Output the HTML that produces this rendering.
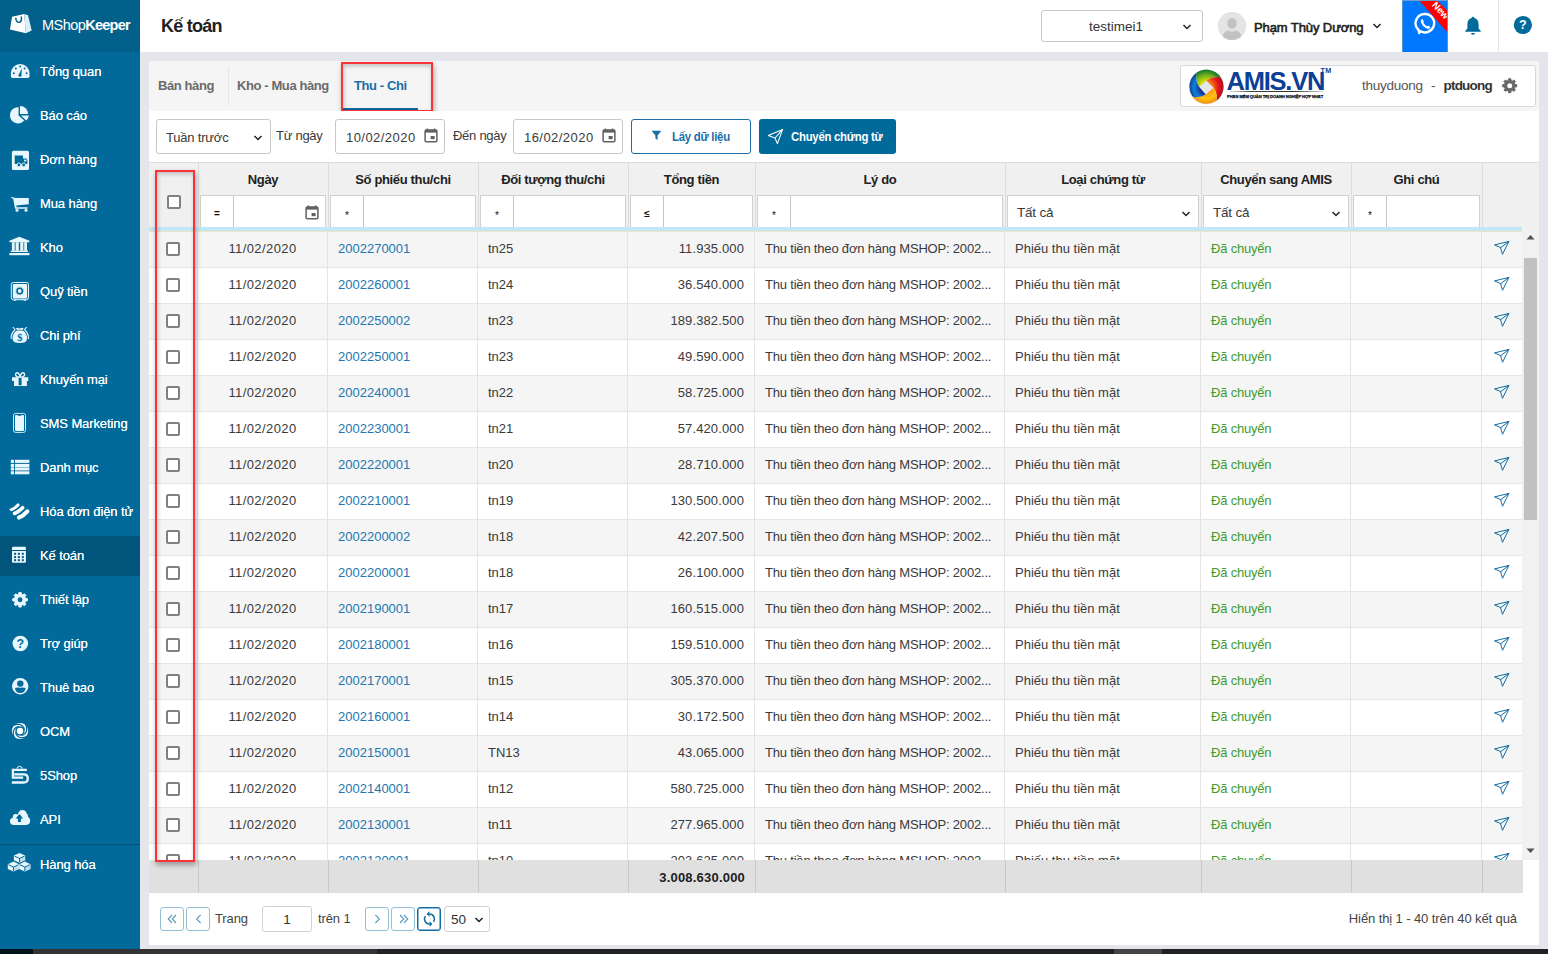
<!DOCTYPE html>
<html lang="vi">
<head>
<meta charset="utf-8">
<title>Kế toán - MShopKeeper</title>
<style>
*{box-sizing:border-box;margin:0;padding:0}
html,body{width:1548px;height:954px;overflow:hidden;background:#e4e6ec;font-family:"Liberation Sans",sans-serif;font-size:13px;color:#333}
#side{position:absolute;left:0;top:0;width:140px;height:949px;background:#026a9b}
#logo{position:absolute;left:0;top:0;width:140px;height:52px;background:#02608a}
#logo svg{position:absolute;left:9px;top:13px}
#logo .t{position:absolute;left:42px;top:15px;font-size:14.5px;color:#fff;letter-spacing:-0.55px;white-space:nowrap;line-height:20px}
#logo .t b{font-weight:700;letter-spacing:-0.75px}
.mi{position:absolute;left:0;width:140px;height:40px;color:#fff;font-size:13px;line-height:40px;white-space:nowrap}
.mi.act{background:#01557d}
.mi svg{position:absolute;left:7px;top:6px;overflow:visible}
.mi span{position:absolute;left:40px;top:0;letter-spacing:-0.1px;text-shadow:0 0 0.6px rgba(255,255,255,.9)}
#sdiv{position:absolute;left:0;top:844px;width:140px;height:1px;background:#014d73}
#top{position:absolute;left:140px;top:0;width:1408px;height:52px;background:#fff}
#top h1{position:absolute;left:21px;top:14px;font-size:18px;line-height:24px;font-weight:700;color:#212121;letter-spacing:-0.75px}
#shop{position:absolute;left:901px;top:10px;width:162px;height:32px;border:1px solid #c8c8c8;border-radius:3px;background:#fff;font-size:13.5px;line-height:32px;color:#333}
#shop span{position:absolute;left:47px;top:0}
.chev{position:absolute}
#ava{position:absolute;left:1078px;top:12px;width:28px;height:28px;border-radius:50%;background:#e2e2e2;overflow:hidden}
#uname{position:absolute;left:1114px;top:19px;font-size:13px;line-height:18px;color:#212121;font-weight:400;-webkit-text-stroke:0.6px #212121;letter-spacing:-0.1px;white-space:nowrap}
#call{position:absolute;left:1262px;top:0;width:46px;height:52px;background:#0077ff;overflow:hidden;border:1px solid #5b93cf;border-top:1px solid #6f9fc8;border-bottom:none}
#call svg{margin:-1px 0 0 -1px}
#newr{position:absolute;left:18px;top:-2px;width:50px;height:16px;background:#e8252d;transform:rotate(45deg);transform-origin:center;color:#fff;font-size:10px;font-weight:700;line-height:16px;text-align:center}
#tsep{position:absolute;left:1358px;top:0;width:1px;height:52px;background:#e6e6e6}
#panel{position:absolute;left:149px;top:61px;width:1390px;overflow:hidden;height:884px;background:#fff}
#tabs{position:absolute;left:0;top:0;width:1391px;height:50px;background:#f5f5f5}
.tab{position:absolute;top:16px;font-size:13px;line-height:18px;font-weight:700;color:#6a6a6a;white-space:nowrap;letter-spacing:-0.4px}
.tab.on{color:#1a6fa8}
#tsp{position:absolute;left:79px;top:6px;width:1px;height:38px;background:#e6e6e6}
#tul{position:absolute;left:194px;top:47px;width:75px;height:2px;background:#0f689f}
.redbox{position:absolute;border:2px solid #f93438;box-shadow:1px 3px 5px rgba(0,0,0,.32),inset 1px 2px 4px rgba(0,0,0,.22)}
#amis{position:absolute;left:1031px;top:4px;width:356px;height:42px;border:1px solid #d8d8d8;border-radius:3px;background:#fff}
#filt{position:absolute;left:0;top:50px;width:1391px;height:51px;background:#fff}
.inp{position:absolute;top:8px;height:35px;border:1px solid #c8c8c8;border-radius:3px;background:#fff;font-size:13px;line-height:35px;color:#3a3a3a;white-space:nowrap;letter-spacing:-0.2px}
.inp .d{letter-spacing:.45px}
.lbl{position:absolute;top:8px;font-size:13px;line-height:34px;color:#3a3a3a;white-space:nowrap;letter-spacing:-0.27px}
.btn{position:absolute;top:8px;height:35px;border-radius:3px;font-size:13px;font-weight:700;line-height:34px;white-space:nowrap;letter-spacing:-0.3px}
.btn span{transform-origin:0 50%;transform:scaleX(.875)}
#ghead{position:absolute;left:0;top:101px;width:1391px;height:65px;background:#f0f0f0;border-top:1px solid #dcdcdc}
.hc{position:absolute;top:0;height:64px;border-right:1px solid #dcdcdc}
.hc .t{position:absolute;left:0;right:0;top:8px;text-align:center;font-size:13px;line-height:18px;font-weight:700;color:#212121;white-space:nowrap;letter-spacing:-0.35px}
.fi{position:absolute;top:32px;height:33px;background:#fff;border:1px solid #d0d0d0;border-bottom-color:#c8c8c8}
.fi i{position:absolute;left:0;top:0;width:33px;height:32px;border-right:1px solid #c4c4c4;font-style:normal;font-size:10px;line-height:39px;text-align:center;color:#111}
.fi .s{position:absolute;left:9px;top:0;font-size:13.5px;line-height:34px;color:#3a3a3a;letter-spacing:-0.2px}
#hline{position:absolute;left:0;top:166px;width:1374px;height:5px;background:#c0e8f8;border-bottom:1px solid #efe3c2}
#gbody{position:absolute;left:0;top:171px;width:1374px;height:628px;overflow:hidden;background:#fff}
.row{position:relative;height:36px;width:1374px;background:#fff;border-bottom:1px solid #e6e6e6}
.row.odd{background:#f5f5f5}
.c{position:absolute;top:0;height:35px;line-height:34px;font-size:13px;color:#3a3a3a;white-space:nowrap;overflow:hidden;border-right:1px solid #e4e4e4}
.c0{left:0;width:49px}
.c1{left:49px;width:130px;text-align:center;letter-spacing:.4px}
.c2{left:179px;width:150px;padding-left:10px}
.c3{left:329px;width:150px;padding-left:10px}
.c4{left:479px;width:127px;text-align:right;padding-right:10px;letter-spacing:.12px}
.c5{left:606px;width:250px;padding-left:10px;letter-spacing:-.19px}
.c6{left:856px;width:196px;padding-left:10px}
.c7{left:1052px;width:150px;padding-left:10px}
.c8{left:1202px;width:131px}
.c9{left:1333px;width:41px;border-right:none}
.lnk{color:#2377b1}
.ok{color:#3f9b2c;letter-spacing:-.2px}
.cb{position:absolute;left:17px;top:10px;width:14px;height:14px;border:2px solid #808080;border-radius:2px;background:#fff}
.send{position:absolute;left:11px;top:8px}
#gfoot{position:absolute;left:0;top:799px;width:1374px;height:33px;background:#e0e0e0}
.fc{position:absolute;top:0;height:33px;border-right:1px solid #c8c8c8}
#total{position:absolute;left:479px;top:0;width:127px;height:32px;text-align:right;padding-right:10px;font-size:13px;font-weight:700;line-height:36px;color:#212121;letter-spacing:.2px}
#vsb{position:absolute;left:1373px;top:166px;width:18px;height:633px;background:#f1f1f1}
#vsb .th{position:absolute;left:2px;top:31px;width:13px;height:262px;background:#c1c1c1}
#pager{position:absolute;left:0;top:832px;width:1391px;height:52px;background:#fff}
.pb{position:absolute;top:14px;width:24px;height:24px;border:1px solid #93c0d6;border-radius:3px;background:#fff}
.pt{position:absolute;top:13px;font-size:13px;line-height:25px;letter-spacing:-.1px;color:#444;white-space:nowrap}
#bbar{position:absolute;left:0;top:949px;width:1548px;height:5px;background:#222}
#bbar1{position:absolute;left:0;top:0;width:33px;height:5px;background:#02121a}
#bbar2{position:absolute;left:1114px;top:0;width:48px;height:5px;background:#444}
#bbar3{position:absolute;left:33px;top:0;width:344px;height:5px;background:#333}

</style>
</head>
<body>
<div id="side">
<div id="logo"><svg width="25" height="22" viewBox="0 0 26 24" preserveAspectRatio="none"><path d="M3.2 4.2 L15.8 1.2 L17.6 22 L1 18 Z" fill="#fff"/><path d="M15.8 1.2 L19.8 2.4 L23.6 19 L17.6 22 Z" fill="#dcf0fa"/><path d="M7 5.2 Q7.4 10.6 10.6 10.2 Q13.6 9.6 12.8 3.8" fill="none" stroke="#02608a" stroke-width="1.6"/></svg><div class="t">MShop<b>Keeper</b></div></div>
<div class="mi" style="top:52px"><svg width="26" height="26" viewBox="0 0 26 26"><g transform="translate(0,4)"><path d="M5.4 16 Q3.9 16 3.9 14.6 V11.2 A9.3 9.3 0 0 1 22.5 11.2 V14.6 Q22.5 16 21 16 Z" fill="#e8f7fe"/><g fill="#026a9b"><circle cx="6.8" cy="11.2" r="1"/><circle cx="8.8" cy="6.6" r="1"/><circle cx="13.2" cy="4.6" r="1"/><circle cx="17.6" cy="6.6" r="1"/><circle cx="19.6" cy="11.2" r="1"/><path d="M15 6.2 L14.4 12.4 A1.6 1.6 0 1 1 12 12 Z"/></g></g></svg><span>Tổng quan</span></div>
<div class="mi" style="top:96px"><svg width="26" height="26" viewBox="0 0 26 26"><g transform="translate(0,4)"><path d="M11.6 1.2 A8.1 8.1 0 1 0 17.2 14.6 L11.6 9.4 Z" fill="#e8f7fe"/><path d="M13 0 A8 8 0 0 1 21 8 L13 8 Z" fill="#e8f7fe"/><path d="M14 9.4 L21.9 9.4 A8.6 8.6 0 0 1 19.3 14.6 Z" fill="#e8f7fe"/></g></svg><span>Báo cáo</span></div>
<div class="mi" style="top:140px"><svg width="26" height="26" viewBox="0 0 26 26"><rect x="4.9" y="4.8" width="17.1" height="19.2" rx="1.6" fill="#e8f7fe"/><path d="M7.7 9.6 H16 V12.6 H19.4 L20.4 14 V18 H7.7 Z" fill="#026a9b"/><rect x="17" y="13.6" width="2.4" height="1.8" fill="#e8f7fe"/><circle cx="11.9" cy="18.9" r="1.9" fill="#026a9b" stroke="#e8f7fe" stroke-width="0.9"/><circle cx="16.7" cy="18.9" r="1.9" fill="#026a9b" stroke="#e8f7fe" stroke-width="0.9"/></svg><span>Đơn hàng</span></div>
<div class="mi" style="top:184px"><svg width="26" height="26" viewBox="0 0 26 26"><path d="M4.3 7 L7.4 7.4 L7.7 8.1 H21.8 V14.2 L9.3 15.6 L9.6 17.2 H20.6 V18.8 H8 L6.2 8.6 L4.3 8.2 Z" fill="#e8f7fe"/><circle cx="10" cy="20.3" r="1.5" fill="#e8f7fe"/><circle cx="19" cy="20.3" r="1.5" fill="#e8f7fe"/></svg><span>Mua hàng</span></div>
<div class="mi" style="top:228px"><svg width="26" height="26" viewBox="0 0 26 26"><g fill="#e8f7fe"><path d="M12.4 2.8 L22.4 6.8 V8.2 H2.4 V6.8 Z"/><rect x="4.9" y="8.2" width="2.8" height="8.6"/><rect x="8.6" y="8.2" width="3.2" height="8.6"/><rect x="13.2" y="8.2" width="3.2" height="8.6"/><rect x="17.2" y="8.2" width="2.8" height="8.6"/><rect x="3.8" y="16.6" width="17.2" height="1.4"/><rect x="2.4" y="19" width="20" height="2.2"/></g></svg><span>Kho</span></div>
<div class="mi" style="top:272px"><svg width="26" height="26" viewBox="0 0 26 26"><rect x="4.3" y="4.5" width="17.2" height="17.2" rx="2" fill="none" stroke="#e8f7fe" stroke-width="1"/><rect x="5.9" y="6" width="14.2" height="14.4" rx="1" fill="#e8f7fe"/><circle cx="12.7" cy="13" r="3.5" fill="#026a9b"/><circle cx="12.7" cy="13" r="1.9" fill="#e8f7fe"/><circle cx="12.7" cy="13" r="4" fill="none" stroke="#026a9b" stroke-width="0.9" stroke-dasharray="1 1.5" opacity=".55"/><rect x="6.6" y="21.8" width="2.6" height="0.9" fill="#e8f7fe"/><rect x="16.4" y="21.8" width="2.6" height="0.9" fill="#e8f7fe"/></svg><span>Quỹ tiền</span></div>
<div class="mi" style="top:316px"><svg width="26" height="26" viewBox="0 0 26 26"><path d="M9 6.2 L10.6 5.8 L12.8 6.4 L15 5.8 L16.6 6.2 L15.6 8.2 Q20.6 11.4 19.9 17.4 Q19.4 20.9 12.8 20.9 Q6.2 20.9 5.7 17.4 Q5 11.4 10 8.2 Z" fill="#e8f7fe"/><path d="M7.8 8 Q3.8 11.4 4.2 17" fill="none" stroke="#e8f7fe" stroke-width="1.1"/><path d="M17.8 8 Q21.8 11.4 21.4 17" fill="none" stroke="#e8f7fe" stroke-width="1.1"/><path d="M5.8 5 L8.4 7.8 M19.8 5 L17.2 7.8" stroke="#e8f7fe" stroke-width="1.1"/><path d="M9.4 8.2 H16.2" stroke="#026a9b" stroke-width="0.7"/><text x="12.8" y="19" font-family="Liberation Serif, serif" font-size="10.5" font-weight="700" fill="#026a9b" text-anchor="middle">$</text></svg><span>Chi phí</span></div>
<div class="mi" style="top:360px"><svg width="26" height="26" viewBox="0 0 26 26"><path d="M5 11.3 H21.3 V15 H5 Z M7 15 H19.9 V20 H7 Z" fill="#e8f7fe"/><rect x="11.6" y="11.3" width="3" height="8" fill="#026a9b"/><path d="M13.1 11 Q9 11.4 8.6 8.8 Q8.6 6.6 10.4 6.6 Q12.4 7 13.1 11 Q13.8 7 15.8 6.6 Q17.6 6.6 17.6 8.8 Q17.2 11.4 13.1 11 Z" fill="none" stroke="#e8f7fe" stroke-width="1.3"/></svg><span>Khuyến mại</span></div>
<div class="mi" style="top:404px"><svg width="26" height="26" viewBox="0 0 26 26"><rect x="6.5" y="3.4" width="12" height="19" rx="2" fill="none" stroke="#e8f7fe" stroke-width="0.9"/><rect x="8" y="4.9" width="9" height="16" rx="1" fill="#e8f7fe"/><rect x="10.6" y="4.6" width="3.8" height="1.1" rx="0.5" fill="#026a9b"/></svg><span>SMS Marketing</span></div>
<div class="mi" style="top:448px"><svg width="26" height="26" viewBox="0 0 26 26"><g fill="#e8f7fe"><rect x="3.8" y="5.8" width="3.2" height="3.1"/><rect x="7.9" y="5.8" width="14.5" height="3.1"/><rect x="3.8" y="9.9" width="3.2" height="3.1"/><rect x="7.9" y="9.9" width="14.5" height="3.1"/><rect x="3.8" y="13.4" width="3.2" height="3.1"/><rect x="7.9" y="13.4" width="14.5" height="3.1"/><rect x="3.8" y="17.3" width="3.2" height="3"/><rect x="7.9" y="17.3" width="14.5" height="3"/></g></svg><span>Danh mục</span></div>
<div class="mi" style="top:492px"><svg width="26" height="26" viewBox="0 0 26 26"><g fill="none" stroke="#fff" stroke-linecap="round"><path d="M11 6.9 Q7.6 10.6 4.6 11.6" stroke-width="3"/><path d="M15.6 9.8 Q11.6 14 7.6 15.4" stroke-width="3.7"/><path d="M20.3 13.4 Q16 18.2 12 19.6" stroke-width="4.2"/></g><path d="M2 10.4 Q4 12 6 11.4 L4.6 13 Q3 12.6 2 10.4 Z" fill="#fff"/></svg><span>Hóa đơn điện tử</span></div>
<div class="mi act" style="top:536px"><svg width="26" height="26" viewBox="0 0 26 26"><path d="M6.2 4.7 H17.7 Q18.9 4.7 18.9 5.9 V8 H5 V5.9 Q5 4.7 6.2 4.7 Z" fill="#e8f7fe"/><path d="M5 9 H18.9 V19.6 Q18.9 20.8 17.7 20.8 H6.2 Q5 20.8 5 19.6 Z" fill="#e8f7fe"/><g fill="#01557d"><rect x="7.1" y="10.8" width="2" height="2"/><rect x="10.9" y="10.8" width="2" height="2"/><rect x="14.8" y="10.8" width="2" height="2"/><rect x="7.1" y="14.1" width="2" height="2"/><rect x="10.9" y="14.1" width="2" height="2"/><rect x="14.8" y="14.1" width="2" height="2"/><rect x="7.1" y="17.2" width="2" height="2"/><rect x="10.9" y="17.2" width="2" height="2"/><rect x="14.8" y="17.2" width="2" height="2"/></g></svg><span>Kế toán</span></div>
<div class="mi" style="top:580px"><svg width="26" height="26" viewBox="0 0 26 26"><path d="M11.89 6.44 L14.21 6.44 L14.38 8.21 L16.03 8.89 L17.40 7.76 L19.04 9.40 L17.91 10.77 L18.59 12.42 L20.36 12.59 L20.36 14.91 L18.59 15.08 L17.91 16.73 L19.04 18.10 L17.40 19.74 L16.03 18.61 L14.38 19.29 L14.21 21.06 L11.89 21.06 L11.72 19.29 L10.07 18.61 L8.70 19.74 L7.06 18.10 L8.19 16.73 L7.51 15.08 L5.74 14.91 L5.74 12.59 L7.51 12.42 L8.19 10.77 L7.06 9.40 L8.70 7.76 L10.07 8.89 L11.72 8.21 Z" fill="#e8f7fe" stroke="#e8f7fe" stroke-width="1" stroke-linejoin="round"/><circle cx="13.05" cy="13.75" r="2.4" fill="#026a9b"/></svg><span>Thiết lập</span></div>
<div class="mi" style="top:624px"><svg width="26" height="26" viewBox="0 0 26 26"><circle cx="13.3" cy="13.5" r="7.8" fill="#e8f7fe"/><text x="13.3" y="18" font-family="Liberation Sans, sans-serif" font-size="12.5" font-weight="700" fill="#026a9b" text-anchor="middle">?</text></svg><span>Trợ giúp</span></div>
<div class="mi" style="top:668px"><svg width="26" height="26" viewBox="0 0 26 26"><circle cx="13.2" cy="12.2" r="8.2" fill="#e8f7fe"/><circle cx="13.3" cy="9.6" r="3.2" fill="#026a9b"/><path d="M8 14 Q10.4 13 13.3 13.8 Q16.2 13 18.6 14 Q18.2 19 13.3 19 Q8.4 19 8 14 Z" fill="#026a9b"/></svg><span>Thuê bao</span></div>
<div class="mi" style="top:712px"><svg width="26" height="26" viewBox="0 0 26 26"><circle cx="13" cy="13" r="8.1" fill="#fff"/><circle cx="13" cy="13" r="4.7" fill="#026a9b"/><circle cx="13" cy="13" r="3.2" fill="#fff"/><path d="M6.68 7.31 L8.01 6.85 L9.22 6.49 L10.40 6.31 L11.54 6.30 L12.62 6.45 L13.61 6.75 L14.50 7.19 L15.28 7.73 L15.94 8.37 L16.46 9.06 L16.84 9.80 L17.08 10.56 L17.20 11.31 L17.19 12.03" fill="none" stroke="#026a9b" stroke-width="1.25" stroke-linejoin="round"/><path d="M18.69 6.68 L19.15 8.01 L19.51 9.22 L19.69 10.40 L19.70 11.54 L19.55 12.62 L19.25 13.61 L18.81 14.50 L18.27 15.28 L17.63 15.94 L16.94 16.46 L16.20 16.84 L15.44 17.08 L14.69 17.20 L13.97 17.19" fill="none" stroke="#026a9b" stroke-width="1.25" stroke-linejoin="round"/><path d="M19.32 18.69 L17.99 19.15 L16.78 19.51 L15.60 19.69 L14.46 19.70 L13.38 19.55 L12.39 19.25 L11.50 18.81 L10.72 18.27 L10.06 17.63 L9.54 16.94 L9.16 16.20 L8.92 15.44 L8.80 14.69 L8.81 13.97" fill="none" stroke="#026a9b" stroke-width="1.25" stroke-linejoin="round"/><path d="M7.31 19.32 L6.85 17.99 L6.49 16.78 L6.31 15.60 L6.30 14.46 L6.45 13.38 L6.75 12.39 L7.19 11.50 L7.73 10.72 L8.37 10.06 L9.06 9.54 L9.80 9.16 L10.56 8.92 L11.31 8.80 L12.03 8.81" fill="none" stroke="#026a9b" stroke-width="1.25" stroke-linejoin="round"/></svg><span>OCM</span></div>
<div class="mi" style="top:756px"><svg width="26" height="26" viewBox="0 0 26 26"><g fill="none" stroke="#e8f7fe"><path d="M10 6.7 Q10 4.4 12.6 4.4 Q15.2 4.4 15.2 6.7" stroke-width="1"/><path d="M19.9 7.9 H5.9 V15.7 H16.1" stroke-width="2.3"/><path d="M7.2 12.4 H16.6 Q20.8 12.4 20.8 16.5 Q20.8 20.5 16.6 20.5 H4.8" stroke-width="2.3"/></g></svg><span>5Shop</span></div>
<div class="mi" style="top:800px"><svg width="26" height="26" viewBox="0 0 26 26"><path d="M7 18.9 Q2.9 18.9 2.9 15.2 Q2.9 12.4 5.8 11.8 Q5.4 8.8 8 8 Q9.6 7.6 10.8 8.6 Q11.8 4 15.4 4 Q19 4 19.6 7.6 Q21 7.8 21.2 11 Q23.2 12 23.2 14.8 Q23.2 18.9 19.2 18.9 Z" fill="#e8f7fe"/><path d="M12.4 8 L16.2 12.4 H13.9 V16 H10.9 V12.4 H8.6 Z" fill="#026a9b"/></svg><span>API</span></div>
<div id="sdiv"></div>
<div class="mi" style="top:845px"><svg width="26" height="26" viewBox="0 0 26 26"><path d="M12.55 2.10 L18.20 4.60 V9.20 L12.55 11.70 L6.90 9.20 V4.60 Z" fill="#e8f7fe"/><path d="M7.50 5.10 L12.55 7.39 L17.60 5.10 M12.55 7.39 V11.10" fill="none" stroke="#026a9b" stroke-width="1"/><path d="M12.55 7.89 L17.70 5.60 V9.00 L12.55 11.20 Z" fill="#026a9b" opacity=".18"/><path d="M6.45 10.60 L12.10 13.20 V18.00 L6.45 20.60 L0.80 18.00 V13.20 Z" fill="#e8f7fe"/><path d="M1.40 13.70 L6.45 16.10 L11.50 13.70 M6.45 16.10 V20.00" fill="none" stroke="#026a9b" stroke-width="1"/><path d="M6.45 16.60 L11.60 14.20 V17.80 L6.45 20.10 Z" fill="#026a9b" opacity=".18"/><path d="M17.85 10.60 L23.50 13.20 V18.00 L17.85 20.60 L12.20 18.00 V13.20 Z" fill="#e8f7fe"/><path d="M12.80 13.70 L17.85 16.10 L22.90 13.70 M17.85 16.10 V20.00" fill="none" stroke="#026a9b" stroke-width="1"/><path d="M17.85 16.60 L23.00 14.20 V17.80 L17.85 20.10 Z" fill="#026a9b" opacity=".18"/></svg><span>Hàng hóa</span></div>
</div>
<div id="top">
<h1>Kế toán</h1>
<div id="shop"><span>testimei1</span><svg class="chev" style="left:140px;top:12px" width="10" height="8" viewBox="0 0 10 8"><path d="M1.5 2 L5 5.5 L8.5 2" fill="none" stroke="#222" stroke-width="1.5"/></svg></div>
<div id="ava"><svg width="28" height="28" viewBox="0 0 28 28"><circle cx="14" cy="14" r="14" fill="#e4e4e4"/><ellipse cx="14" cy="11.4" rx="4.6" ry="5.4" fill="#c2c2c2"/><path d="M4 28 Q4 19 11 18.4 L14 20 L17 18.4 Q24 19 24 28 Z" fill="#c2c2c2"/></svg></div>
<div id="uname">Phạm Thùy Dương</div>
<svg class="chev" style="left:1232px;top:22px" width="10" height="8" viewBox="0 0 10 8"><path d="M1.5 2 L5 5.5 L8.5 2" fill="none" stroke="#222" stroke-width="1.5"/></svg>
<div id="call"><svg style="position:absolute;left:0;top:0" width="46" height="52" viewBox="0 0 46 52"><path d="M23 14 A9.2 9.2 0 1 1 18.6 31.3 L17.2 33 L16.6 30 A9.2 9.2 0 0 1 23 14 Z" fill="none" stroke="#fff" stroke-width="2.4" stroke-linejoin="round"/><path d="M19.4 19.6 Q20.2 18.6 20.8 19.4 L21.8 21.4 Q22 22 21.3 22.6 Q22.4 25 25 26.3 Q25.6 25.6 26.2 25.8 L28 26.8 Q28.6 27.4 27.8 28.2 Q26.6 29.4 24.2 28.2 Q20.4 26 19 22.4 Q18.6 20.6 19.4 19.6 Z" fill="#fff"/><path d="M17.6 0.8 L35.4 0.8 L45.2 10.4 L45.2 32.1 Z" fill="#ff0000"/><text x="0" y="0" transform="translate(36.2,12.6) rotate(47)" font-family="Liberation Sans, sans-serif" font-size="9.6" font-weight="700" fill="#fff" text-anchor="middle">New</text></svg></div>
<svg style="position:absolute;left:1324px;top:16px" width="18" height="20" viewBox="0 0 18 20"><path d="M9 0.8 Q10.2 0.8 10.3 2 Q14.4 3 14.6 8 V12.6 L16.8 15 V15.8 H1.2 V15 L3.4 12.6 V8 Q3.6 3 7.7 2 Q7.8 0.8 9 0.8 Z" fill="#026a9b"/><path d="M7 17 H11 Q10.8 18.8 9 18.8 Q7.2 18.8 7 17 Z" fill="#026a9b"/></svg>
<div id="tsep"></div>
<svg style="position:absolute;left:1373px;top:15px" width="20" height="20" viewBox="0 0 20 20"><circle cx="9.9" cy="10" r="9.1" fill="#026a9b"/><text x="9.9" y="14.4" font-family="Liberation Sans, sans-serif" font-size="12.5" font-weight="700" fill="#fff" text-anchor="middle">?</text></svg>
</div>

<div id="panel">
<div id="tabs"><div class="tab" style="left:9px">Bán hàng</div><div id="tsp"></div><div class="tab" style="left:88px">Kho - Mua hàng</div><div class="tab on" style="left:205px">Thu - Chi</div><div id="tul"></div>
<div class="redbox" style="left:192px;top:1px;width:92px;height:50px"></div>
<div id="amis"><svg style="position:absolute;left:7.3px;top:2.5px" width="36.4" height="36.4" viewBox="0 0 36 36"><defs><radialGradient id="gg" cx="18" cy="18" r="17.4" gradientUnits="userSpaceOnUse"><stop offset="0.35" stop-color="#d6dc00"/><stop offset="0.7" stop-color="#6fb01e"/><stop offset="1" stop-color="#0b7428"/></radialGradient><radialGradient id="gr" cx="18" cy="18" r="17.4" gradientUnits="userSpaceOnUse"><stop offset="0.35" stop-color="#f47a14"/><stop offset="0.7" stop-color="#e8141c"/><stop offset="1" stop-color="#a81018"/></radialGradient><radialGradient id="go" cx="18" cy="18" r="17.4" gradientUnits="userSpaceOnUse"><stop offset="0.3" stop-color="#f7931a"/><stop offset="0.65" stop-color="#ffc60a"/><stop offset="1" stop-color="#f08010"/></radialGradient><radialGradient id="gb" cx="18" cy="18" r="17.4" gradientUnits="userSpaceOnUse"><stop offset="0.35" stop-color="#1b2d96"/><stop offset="0.7" stop-color="#0b86d6"/><stop offset="1" stop-color="#14309c"/></radialGradient></defs><circle cx="18" cy="18" r="17.2" fill="#e4e6e8"/><path d="M10.9 17.6 L18.2 11.4 Q26 7 32.6 8.3 A17.4 17.4 0 0 0 8.3 3.6 Q7 11 10.9 17.6 Z" fill="url(#gg)"/><path d="M18.2 11.4 L25.4 18.6 Q30 25 28 31.5 A17.4 17.4 0 0 0 32.6 8.3 Q26 7 18.2 11.4 Z" fill="url(#gr)"/><path d="M25.4 18.6 L17.6 25.3 Q10 29.5 4.2 26.9 A17.4 17.4 0 0 0 28 31.5 Q30 25 25.4 18.6 Z" fill="url(#go)"/><path d="M17.6 25.3 L10.9 17.6 Q7 11 8.3 3.6 A17.4 17.4 0 0 0 4.2 26.9 Q10 29.5 17.6 25.3 Z" fill="url(#gb)"/></svg>
<div style="position:absolute;left:45.6px;top:2px;width:98px;height:26px;font-size:25.5px;line-height:27px;font-weight:700;color:#0c3f98;letter-spacing:-1.25px;white-space:nowrap">AMIS.VN</div>
<div style="position:absolute;left:139.5px;top:1px;font-size:7.2px;line-height:8px;font-weight:700;color:#0c3f98;white-space:nowrap;letter-spacing:.4px">TM</div>
<div style="position:absolute;left:46px;top:24.6px;width:96px;height:1px;background:linear-gradient(90deg,rgba(60,60,60,0),#444 25%,#333 70%,rgba(60,60,60,.2))"></div>
<div style="position:absolute;left:46px;top:28.3px;font-size:4.1px;line-height:6px;font-weight:700;color:#111;-webkit-text-stroke:.25px #111;white-space:nowrap;letter-spacing:-0.07px">PHẦN MỀM QUẢN TRỊ DOANH NGHIỆP HỢP NHẤT</div>
<div style="position:absolute;left:181px;top:11px;font-size:13.5px;line-height:18px;color:#555;white-space:nowrap;letter-spacing:-0.25px">thuyduong</div>
<div style="position:absolute;left:250px;top:11px;font-size:13.5px;line-height:18px;color:#555">-</div>
<div style="position:absolute;left:262.5px;top:11px;font-size:13.5px;line-height:18px;font-weight:700;color:#333;white-space:nowrap;letter-spacing:-0.8px">ptduong</div>
<svg style="position:absolute;left:320px;top:11px" width="18" height="18" viewBox="0 0 18 18"><path d="M7.59 1.69 L9.81 1.69 L9.96 3.45 L11.52 4.10 L12.87 2.96 L14.44 4.53 L13.30 5.88 L13.95 7.44 L15.71 7.59 L15.71 9.81 L13.95 9.96 L13.30 11.52 L14.44 12.87 L12.87 14.44 L11.52 13.30 L9.96 13.95 L9.81 15.71 L7.59 15.71 L7.44 13.95 L5.88 13.30 L4.53 14.44 L2.96 12.87 L4.10 11.52 L3.45 9.96 L1.69 9.81 L1.69 7.59 L3.45 7.44 L4.10 5.88 L2.96 4.53 L4.53 2.96 L5.88 4.10 L7.44 3.45 Z" fill="#686868" stroke="#686868" stroke-width="1" stroke-linejoin="round"/><circle cx="8.7" cy="8.7" r="2.5" fill="#fff"/></svg>
</div></div>
<div id="filt">
<div class="inp" style="left:7px;width:115px"><span style="position:absolute;left:9px">Tuần trước</span><svg class="chev" style="left:96px;top:14px" width="10" height="8" viewBox="0 0 10 8"><path d="M1.5 2 L5 5.5 L8.5 2" fill="none" stroke="#222" stroke-width="1.5"/></svg></div>
<div class="lbl" style="left:127px">Từ ngày</div>
<div class="inp" style="left:186px;width:110px"><span class="d" style="position:absolute;left:10px">10/02/2020</span><svg class="cal" style="position:absolute;left:88px;top:8px" width="14" height="15" viewBox="0 0 14 15"><path d="M3.4 0.4 V2 M10.6 0.4 V2" stroke="#616161" stroke-width="1.6"/><rect x="1.1" y="1.9" width="11.8" height="11.8" rx="1.2" fill="none" stroke="#616161" stroke-width="1.5"/><rect x="1" y="2" width="12" height="2.6" fill="#616161"/><rect x="6.6" y="8" width="4" height="3.2" fill="#616161"/></svg></div>
<div class="lbl" style="left:304px">Đến ngày</div>
<div class="inp" style="left:364px;width:110px"><span class="d" style="position:absolute;left:10px">16/02/2020</span><svg class="cal" style="position:absolute;left:88px;top:8px" width="14" height="15" viewBox="0 0 14 15"><path d="M3.4 0.4 V2 M10.6 0.4 V2" stroke="#616161" stroke-width="1.6"/><rect x="1.1" y="1.9" width="11.8" height="11.8" rx="1.2" fill="none" stroke="#616161" stroke-width="1.5"/><rect x="1" y="2" width="12" height="2.6" fill="#616161"/><rect x="6.6" y="8" width="4" height="3.2" fill="#616161"/></svg></div>
<div class="btn" style="left:482px;width:120px;border:1px solid #1a6fa8;color:#1a6fa8;background:#fff"><svg style="position:absolute;left:19px;top:10px" width="11" height="11" viewBox="0 0 11 11"><path d="M0.6 0.8 H10.4 L6.6 5.4 V10 L4.4 8.6 V5.4 Z" fill="#1a6fa8"/></svg><span style="position:absolute;left:40px">Lấy dữ liệu</span></div>
<div class="btn" style="left:610px;width:137px;background:#026a9b;color:#fff;line-height:36px"><svg style="position:absolute;left:8px;top:9px" width="17" height="17" viewBox="0 0 17 17"><path d="M1.2 7.6 L15.6 1.4 L10.4 15.6 L8 10 L15.6 1.4 M8 10 L1.2 7.6" fill="none" stroke="#fff" stroke-width="1.1" stroke-linejoin="round"/></svg><span style="position:absolute;left:32px">Chuyển chứng từ</span></div>
</div>
<div id="ghead">
<div class="hc" style="left:0px;width:50px"><span class="cb" style="left:18px;top:32px"></span></div>
<div class="hc" style="left:49px;width:131px"><div class="t">Ngày</div><div class="fi" style="left:2px;width:126px"><i style="font-size:10px;font-weight:700;line-height:36px">=</i><svg class="cal" style="position:absolute;left:104px;top:9px" width="14" height="15" viewBox="0 0 14 15"><path d="M3.4 0.4 V2 M10.6 0.4 V2" stroke="#616161" stroke-width="1.6"/><rect x="1.1" y="1.9" width="11.8" height="11.8" rx="1.2" fill="none" stroke="#616161" stroke-width="1.5"/><rect x="1" y="2" width="12" height="2.6" fill="#616161"/><rect x="6.6" y="8" width="4" height="3.2" fill="#616161"/></svg></div></div>
<div class="hc" style="left:179px;width:151px"><div class="t">Số phiếu thu/chi</div><div class="fi" style="left:2px;width:146px"><i>*</i></div></div>
<div class="hc" style="left:329px;width:151px"><div class="t">Đối tượng thu/chi</div><div class="fi" style="left:2px;width:146px"><i>*</i></div></div>
<div class="hc" style="left:479px;width:128px"><div class="t">Tổng tiền</div><div class="fi" style="left:2px;width:123px"><i style="font-size:10px;font-weight:700;line-height:36px">≤</i></div></div>
<div class="hc" style="left:606px;width:251px"><div class="t">Lý do</div><div class="fi" style="left:2px;width:246px"><i>*</i></div></div>
<div class="hc" style="left:856px;width:197px"><div class="t">Loại chứng từ</div><div class="fi" style="left:2px;width:192px"><span class="s">Tất cả</span><svg class="chev" style="left:173px;top:14px" width="10" height="8" viewBox="0 0 10 8"><path d="M1.5 2 L5 5.5 L8.5 2" fill="none" stroke="#222" stroke-width="1.5"/></svg></div></div>
<div class="hc" style="left:1052px;width:151px"><div class="t">Chuyển sang AMIS</div><div class="fi" style="left:2px;width:146px"><span class="s">Tất cả</span><svg class="chev" style="left:127px;top:14px" width="10" height="8" viewBox="0 0 10 8"><path d="M1.5 2 L5 5.5 L8.5 2" fill="none" stroke="#222" stroke-width="1.5"/></svg></div></div>
<div class="hc" style="left:1202px;width:132px"><div class="t">Ghi chú</div><div class="fi" style="left:2px;width:127px"><i>*</i></div></div>
<div class="hc" style="left:1333px;width:58px;border-right:none"></div>
</div>
<div id="hline"></div>
<div id="gbody">
<div class="row odd"><div class="c c0"><span class="cb"></span></div><div class="c c1">11/02/2020</div><div class="c c2"><span class="lnk">2002270001</span></div><div class="c c3">tn25</div><div class="c c4">11.935.000</div><div class="c c5">Thu tiền theo đơn hàng MSHOP: 2002...</div><div class="c c6">Phiếu thu tiền mặt</div><div class="c c7"><span class="ok">Đã chuyển</span></div><div class="c c8"></div><div class="c c9"><svg class="send" width="18" height="18" viewBox="0 0 18 18"><path d="M1.9 4.8 L15.9 1.4 L9.5 14.3 L7.6 7.8 Z M7.6 7.8 L15.9 1.4" fill="none" stroke="#0f6ea3" stroke-width="1" stroke-linejoin="round" stroke-linecap="round"/></svg></div></div>
<div class="row"><div class="c c0"><span class="cb"></span></div><div class="c c1">11/02/2020</div><div class="c c2"><span class="lnk">2002260001</span></div><div class="c c3">tn24</div><div class="c c4">36.540.000</div><div class="c c5">Thu tiền theo đơn hàng MSHOP: 2002...</div><div class="c c6">Phiếu thu tiền mặt</div><div class="c c7"><span class="ok">Đã chuyển</span></div><div class="c c8"></div><div class="c c9"><svg class="send" width="18" height="18" viewBox="0 0 18 18"><path d="M1.9 4.8 L15.9 1.4 L9.5 14.3 L7.6 7.8 Z M7.6 7.8 L15.9 1.4" fill="none" stroke="#0f6ea3" stroke-width="1" stroke-linejoin="round" stroke-linecap="round"/></svg></div></div>
<div class="row odd"><div class="c c0"><span class="cb"></span></div><div class="c c1">11/02/2020</div><div class="c c2"><span class="lnk">2002250002</span></div><div class="c c3">tn23</div><div class="c c4">189.382.500</div><div class="c c5">Thu tiền theo đơn hàng MSHOP: 2002...</div><div class="c c6">Phiếu thu tiền mặt</div><div class="c c7"><span class="ok">Đã chuyển</span></div><div class="c c8"></div><div class="c c9"><svg class="send" width="18" height="18" viewBox="0 0 18 18"><path d="M1.9 4.8 L15.9 1.4 L9.5 14.3 L7.6 7.8 Z M7.6 7.8 L15.9 1.4" fill="none" stroke="#0f6ea3" stroke-width="1" stroke-linejoin="round" stroke-linecap="round"/></svg></div></div>
<div class="row"><div class="c c0"><span class="cb"></span></div><div class="c c1">11/02/2020</div><div class="c c2"><span class="lnk">2002250001</span></div><div class="c c3">tn23</div><div class="c c4">49.590.000</div><div class="c c5">Thu tiền theo đơn hàng MSHOP: 2002...</div><div class="c c6">Phiếu thu tiền mặt</div><div class="c c7"><span class="ok">Đã chuyển</span></div><div class="c c8"></div><div class="c c9"><svg class="send" width="18" height="18" viewBox="0 0 18 18"><path d="M1.9 4.8 L15.9 1.4 L9.5 14.3 L7.6 7.8 Z M7.6 7.8 L15.9 1.4" fill="none" stroke="#0f6ea3" stroke-width="1" stroke-linejoin="round" stroke-linecap="round"/></svg></div></div>
<div class="row odd"><div class="c c0"><span class="cb"></span></div><div class="c c1">11/02/2020</div><div class="c c2"><span class="lnk">2002240001</span></div><div class="c c3">tn22</div><div class="c c4">58.725.000</div><div class="c c5">Thu tiền theo đơn hàng MSHOP: 2002...</div><div class="c c6">Phiếu thu tiền mặt</div><div class="c c7"><span class="ok">Đã chuyển</span></div><div class="c c8"></div><div class="c c9"><svg class="send" width="18" height="18" viewBox="0 0 18 18"><path d="M1.9 4.8 L15.9 1.4 L9.5 14.3 L7.6 7.8 Z M7.6 7.8 L15.9 1.4" fill="none" stroke="#0f6ea3" stroke-width="1" stroke-linejoin="round" stroke-linecap="round"/></svg></div></div>
<div class="row"><div class="c c0"><span class="cb"></span></div><div class="c c1">11/02/2020</div><div class="c c2"><span class="lnk">2002230001</span></div><div class="c c3">tn21</div><div class="c c4">57.420.000</div><div class="c c5">Thu tiền theo đơn hàng MSHOP: 2002...</div><div class="c c6">Phiếu thu tiền mặt</div><div class="c c7"><span class="ok">Đã chuyển</span></div><div class="c c8"></div><div class="c c9"><svg class="send" width="18" height="18" viewBox="0 0 18 18"><path d="M1.9 4.8 L15.9 1.4 L9.5 14.3 L7.6 7.8 Z M7.6 7.8 L15.9 1.4" fill="none" stroke="#0f6ea3" stroke-width="1" stroke-linejoin="round" stroke-linecap="round"/></svg></div></div>
<div class="row odd"><div class="c c0"><span class="cb"></span></div><div class="c c1">11/02/2020</div><div class="c c2"><span class="lnk">2002220001</span></div><div class="c c3">tn20</div><div class="c c4">28.710.000</div><div class="c c5">Thu tiền theo đơn hàng MSHOP: 2002...</div><div class="c c6">Phiếu thu tiền mặt</div><div class="c c7"><span class="ok">Đã chuyển</span></div><div class="c c8"></div><div class="c c9"><svg class="send" width="18" height="18" viewBox="0 0 18 18"><path d="M1.9 4.8 L15.9 1.4 L9.5 14.3 L7.6 7.8 Z M7.6 7.8 L15.9 1.4" fill="none" stroke="#0f6ea3" stroke-width="1" stroke-linejoin="round" stroke-linecap="round"/></svg></div></div>
<div class="row"><div class="c c0"><span class="cb"></span></div><div class="c c1">11/02/2020</div><div class="c c2"><span class="lnk">2002210001</span></div><div class="c c3">tn19</div><div class="c c4">130.500.000</div><div class="c c5">Thu tiền theo đơn hàng MSHOP: 2002...</div><div class="c c6">Phiếu thu tiền mặt</div><div class="c c7"><span class="ok">Đã chuyển</span></div><div class="c c8"></div><div class="c c9"><svg class="send" width="18" height="18" viewBox="0 0 18 18"><path d="M1.9 4.8 L15.9 1.4 L9.5 14.3 L7.6 7.8 Z M7.6 7.8 L15.9 1.4" fill="none" stroke="#0f6ea3" stroke-width="1" stroke-linejoin="round" stroke-linecap="round"/></svg></div></div>
<div class="row odd"><div class="c c0"><span class="cb"></span></div><div class="c c1">11/02/2020</div><div class="c c2"><span class="lnk">2002200002</span></div><div class="c c3">tn18</div><div class="c c4">42.207.500</div><div class="c c5">Thu tiền theo đơn hàng MSHOP: 2002...</div><div class="c c6">Phiếu thu tiền mặt</div><div class="c c7"><span class="ok">Đã chuyển</span></div><div class="c c8"></div><div class="c c9"><svg class="send" width="18" height="18" viewBox="0 0 18 18"><path d="M1.9 4.8 L15.9 1.4 L9.5 14.3 L7.6 7.8 Z M7.6 7.8 L15.9 1.4" fill="none" stroke="#0f6ea3" stroke-width="1" stroke-linejoin="round" stroke-linecap="round"/></svg></div></div>
<div class="row"><div class="c c0"><span class="cb"></span></div><div class="c c1">11/02/2020</div><div class="c c2"><span class="lnk">2002200001</span></div><div class="c c3">tn18</div><div class="c c4">26.100.000</div><div class="c c5">Thu tiền theo đơn hàng MSHOP: 2002...</div><div class="c c6">Phiếu thu tiền mặt</div><div class="c c7"><span class="ok">Đã chuyển</span></div><div class="c c8"></div><div class="c c9"><svg class="send" width="18" height="18" viewBox="0 0 18 18"><path d="M1.9 4.8 L15.9 1.4 L9.5 14.3 L7.6 7.8 Z M7.6 7.8 L15.9 1.4" fill="none" stroke="#0f6ea3" stroke-width="1" stroke-linejoin="round" stroke-linecap="round"/></svg></div></div>
<div class="row odd"><div class="c c0"><span class="cb"></span></div><div class="c c1">11/02/2020</div><div class="c c2"><span class="lnk">2002190001</span></div><div class="c c3">tn17</div><div class="c c4">160.515.000</div><div class="c c5">Thu tiền theo đơn hàng MSHOP: 2002...</div><div class="c c6">Phiếu thu tiền mặt</div><div class="c c7"><span class="ok">Đã chuyển</span></div><div class="c c8"></div><div class="c c9"><svg class="send" width="18" height="18" viewBox="0 0 18 18"><path d="M1.9 4.8 L15.9 1.4 L9.5 14.3 L7.6 7.8 Z M7.6 7.8 L15.9 1.4" fill="none" stroke="#0f6ea3" stroke-width="1" stroke-linejoin="round" stroke-linecap="round"/></svg></div></div>
<div class="row"><div class="c c0"><span class="cb"></span></div><div class="c c1">11/02/2020</div><div class="c c2"><span class="lnk">2002180001</span></div><div class="c c3">tn16</div><div class="c c4">159.510.000</div><div class="c c5">Thu tiền theo đơn hàng MSHOP: 2002...</div><div class="c c6">Phiếu thu tiền mặt</div><div class="c c7"><span class="ok">Đã chuyển</span></div><div class="c c8"></div><div class="c c9"><svg class="send" width="18" height="18" viewBox="0 0 18 18"><path d="M1.9 4.8 L15.9 1.4 L9.5 14.3 L7.6 7.8 Z M7.6 7.8 L15.9 1.4" fill="none" stroke="#0f6ea3" stroke-width="1" stroke-linejoin="round" stroke-linecap="round"/></svg></div></div>
<div class="row odd"><div class="c c0"><span class="cb"></span></div><div class="c c1">11/02/2020</div><div class="c c2"><span class="lnk">2002170001</span></div><div class="c c3">tn15</div><div class="c c4">305.370.000</div><div class="c c5">Thu tiền theo đơn hàng MSHOP: 2002...</div><div class="c c6">Phiếu thu tiền mặt</div><div class="c c7"><span class="ok">Đã chuyển</span></div><div class="c c8"></div><div class="c c9"><svg class="send" width="18" height="18" viewBox="0 0 18 18"><path d="M1.9 4.8 L15.9 1.4 L9.5 14.3 L7.6 7.8 Z M7.6 7.8 L15.9 1.4" fill="none" stroke="#0f6ea3" stroke-width="1" stroke-linejoin="round" stroke-linecap="round"/></svg></div></div>
<div class="row"><div class="c c0"><span class="cb"></span></div><div class="c c1">11/02/2020</div><div class="c c2"><span class="lnk">2002160001</span></div><div class="c c3">tn14</div><div class="c c4">30.172.500</div><div class="c c5">Thu tiền theo đơn hàng MSHOP: 2002...</div><div class="c c6">Phiếu thu tiền mặt</div><div class="c c7"><span class="ok">Đã chuyển</span></div><div class="c c8"></div><div class="c c9"><svg class="send" width="18" height="18" viewBox="0 0 18 18"><path d="M1.9 4.8 L15.9 1.4 L9.5 14.3 L7.6 7.8 Z M7.6 7.8 L15.9 1.4" fill="none" stroke="#0f6ea3" stroke-width="1" stroke-linejoin="round" stroke-linecap="round"/></svg></div></div>
<div class="row odd"><div class="c c0"><span class="cb"></span></div><div class="c c1">11/02/2020</div><div class="c c2"><span class="lnk">2002150001</span></div><div class="c c3">TN13</div><div class="c c4">43.065.000</div><div class="c c5">Thu tiền theo đơn hàng MSHOP: 2002...</div><div class="c c6">Phiếu thu tiền mặt</div><div class="c c7"><span class="ok">Đã chuyển</span></div><div class="c c8"></div><div class="c c9"><svg class="send" width="18" height="18" viewBox="0 0 18 18"><path d="M1.9 4.8 L15.9 1.4 L9.5 14.3 L7.6 7.8 Z M7.6 7.8 L15.9 1.4" fill="none" stroke="#0f6ea3" stroke-width="1" stroke-linejoin="round" stroke-linecap="round"/></svg></div></div>
<div class="row"><div class="c c0"><span class="cb"></span></div><div class="c c1">11/02/2020</div><div class="c c2"><span class="lnk">2002140001</span></div><div class="c c3">tn12</div><div class="c c4">580.725.000</div><div class="c c5">Thu tiền theo đơn hàng MSHOP: 2002...</div><div class="c c6">Phiếu thu tiền mặt</div><div class="c c7"><span class="ok">Đã chuyển</span></div><div class="c c8"></div><div class="c c9"><svg class="send" width="18" height="18" viewBox="0 0 18 18"><path d="M1.9 4.8 L15.9 1.4 L9.5 14.3 L7.6 7.8 Z M7.6 7.8 L15.9 1.4" fill="none" stroke="#0f6ea3" stroke-width="1" stroke-linejoin="round" stroke-linecap="round"/></svg></div></div>
<div class="row odd"><div class="c c0"><span class="cb"></span></div><div class="c c1">11/02/2020</div><div class="c c2"><span class="lnk">2002130001</span></div><div class="c c3">tn11</div><div class="c c4">277.965.000</div><div class="c c5">Thu tiền theo đơn hàng MSHOP: 2002...</div><div class="c c6">Phiếu thu tiền mặt</div><div class="c c7"><span class="ok">Đã chuyển</span></div><div class="c c8"></div><div class="c c9"><svg class="send" width="18" height="18" viewBox="0 0 18 18"><path d="M1.9 4.8 L15.9 1.4 L9.5 14.3 L7.6 7.8 Z M7.6 7.8 L15.9 1.4" fill="none" stroke="#0f6ea3" stroke-width="1" stroke-linejoin="round" stroke-linecap="round"/></svg></div></div>
<div class="row"><div class="c c0"><span class="cb"></span></div><div class="c c1">11/02/2020</div><div class="c c2"><span class="lnk">2002120001</span></div><div class="c c3">tn10</div><div class="c c4">203.625.000</div><div class="c c5">Thu tiền theo đơn hàng MSHOP: 2002...</div><div class="c c6">Phiếu thu tiền mặt</div><div class="c c7"><span class="ok">Đã chuyển</span></div><div class="c c8"></div><div class="c c9"><svg class="send" width="18" height="18" viewBox="0 0 18 18"><path d="M1.9 4.8 L15.9 1.4 L9.5 14.3 L7.6 7.8 Z M7.6 7.8 L15.9 1.4" fill="none" stroke="#0f6ea3" stroke-width="1" stroke-linejoin="round" stroke-linecap="round"/></svg></div></div>
</div>
<div id="vsb"><svg style="position:absolute;left:4px;top:7px" width="9" height="6" viewBox="0 0 9 6"><path d="M0.5 5.5 L4.5 1 L8.5 5.5 Z" fill="#505050"/></svg><div class="th"></div><svg style="position:absolute;left:4px;top:621px" width="9" height="6" viewBox="0 0 9 6"><path d="M0.5 0.5 L4.5 5 L8.5 0.5 Z" fill="#505050"/></svg></div>
<div id="gfoot">
<div class="fc" style="left:0px;width:50px"></div>
<div class="fc" style="left:49px;width:131px"></div>
<div class="fc" style="left:179px;width:151px"></div>
<div class="fc" style="left:329px;width:151px"></div>
<div class="fc" style="left:479px;width:128px"></div>
<div class="fc" style="left:606px;width:251px"></div>
<div class="fc" style="left:856px;width:197px"></div>
<div class="fc" style="left:1052px;width:151px"></div>
<div class="fc" style="left:1202px;width:132px"></div>
<div id="total">3.008.630.000</div>
</div>
<div class="redbox" style="left:6px;top:109px;width:40px;height:692px"></div>
<div id="pager">
<div class="pb" style="left:11px"><svg style="position:absolute;left:6px;top:6px" width="10" height="10" viewBox="0 0 10 10"><path d="M5 1 L1.2 5 L5 9 M9 1 L5.2 5 L9 9" fill="none" stroke="#5a9bbd" stroke-width="1.1"/></svg></div><div class="pb" style="left:37px"><svg style="position:absolute;left:8px;top:6px" width="7" height="10" viewBox="0 0 7 10"><path d="M5.6 1 L1.6 5 L5.6 9" fill="none" stroke="#5a9bbd" stroke-width="1.1"/></svg></div>
<div class="pt" style="left:66px">Trang</div>
<div class="pb" style="left:113px;top:13px;height:26px;width:50px;border-color:#d0d0d0;text-align:center;font-size:13.5px;line-height:26px;color:#333">1</div>
<div class="pt" style="left:169px">trên 1</div>
<div class="pb" style="left:216px"><svg style="position:absolute;left:8px;top:6px" width="7" height="10" viewBox="0 0 7 10"><path d="M1.4 1 L5.4 5 L1.4 9" fill="none" stroke="#5a9bbd" stroke-width="1.1"/></svg></div><div class="pb" style="left:242px"><svg style="position:absolute;left:7px;top:6px" width="10" height="10" viewBox="0 0 10 10"><path d="M1 1 L4.8 5 L1 9 M5 1 L8.8 5 L5 9" fill="none" stroke="#5a9bbd" stroke-width="1.1"/></svg></div>
<div class="pb" style="left:268px;border-color:#0f6ea3;box-shadow:inset 0 0 0 .5px #0f6ea3"><svg style="position:absolute;left:3.5px;top:3px" width="15" height="16" viewBox="0 0 15 16"><path d="M7.5 3 A5 5 0 0 1 11.6 10.8 M7.5 13 A5 5 0 0 1 3.4 5.2" fill="none" stroke="#026a9b" stroke-width="1.5"/><path d="M7.5 0.2 L7.5 5.8 L4.6 3 Z M7.5 10.2 L7.5 15.8 L10.4 13 Z" fill="#026a9b"/></svg></div>
<div class="pb" style="left:295px;top:13px;height:26px;width:46px;border-color:#d0d0d0"><span style="position:absolute;left:6px;top:0;font-size:13.5px;line-height:25px;color:#333">50</span><svg class="chev" style="left:29px;top:9px" width="10" height="8" viewBox="0 0 10 8"><path d="M1.5 2 L5 5.5 L8.5 2" fill="none" stroke="#222" stroke-width="1.5"/></svg></div>
<div class="pt" style="right:23px">Hiển thị 1 - 40 trên 40 kết quả</div>
</div>
</div>
<div id="bbar"><div id="bbar1"></div><div id="bbar2"></div><div id="bbar3"></div></div>
</body>
</html>
